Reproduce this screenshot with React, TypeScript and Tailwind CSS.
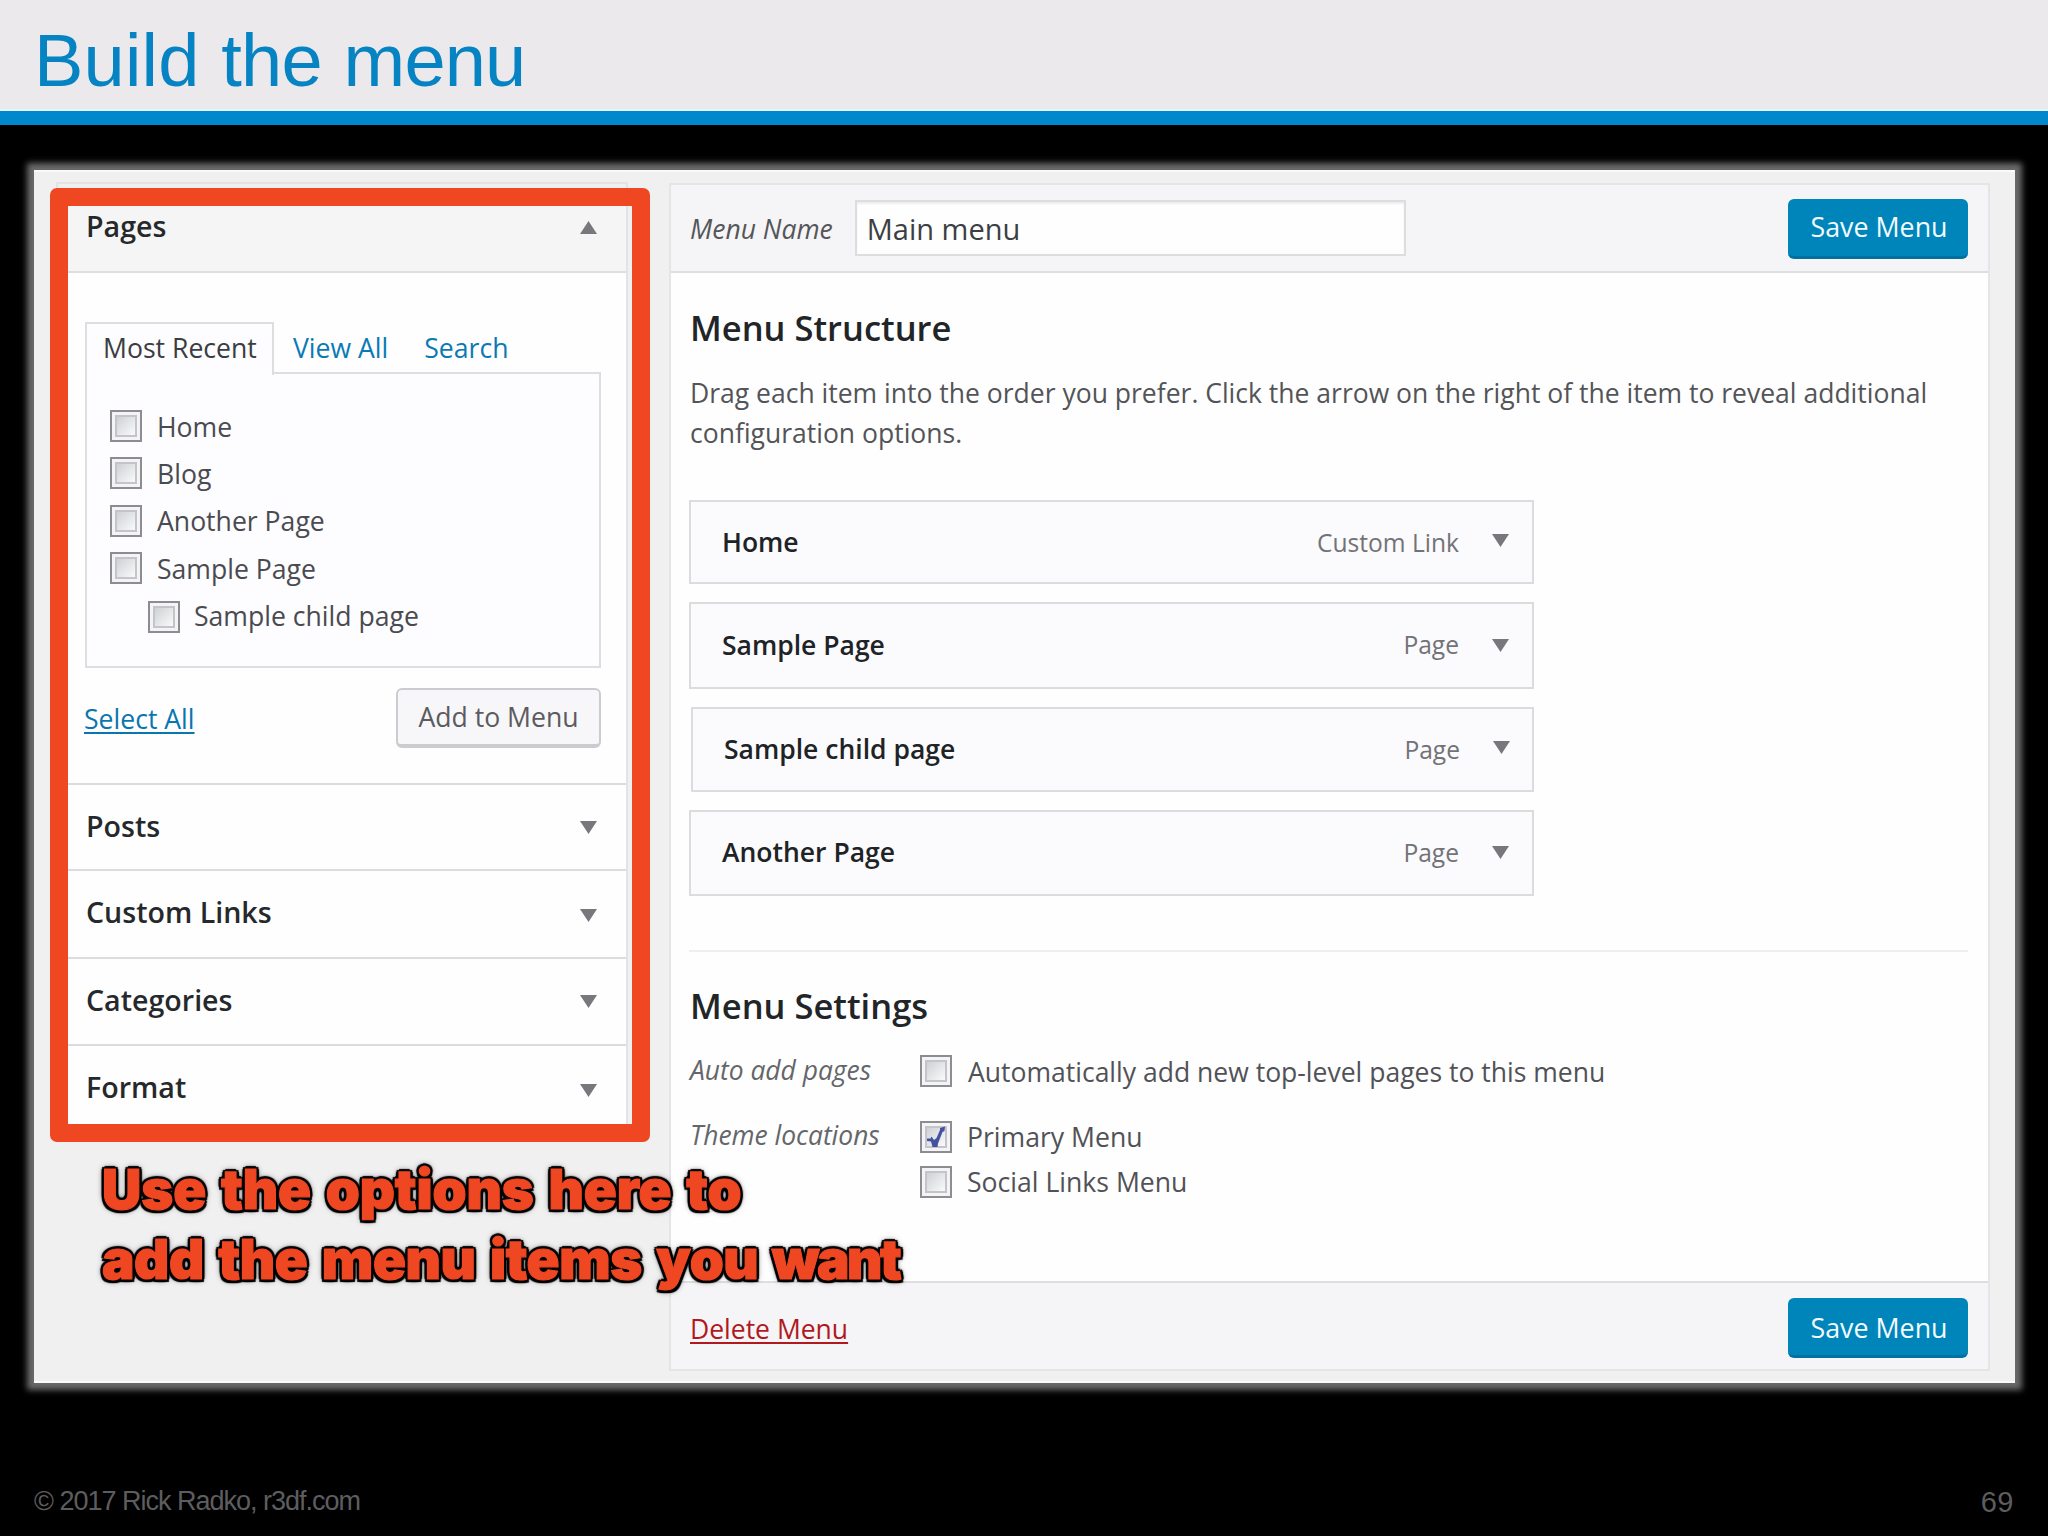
import type { ReactNode } from 'react';

function Triangle({ up = false, className = '' }: { up?: boolean; className?: string }) {
  return (
    <svg viewBox="0 0 17 13" className={`h-[13px] w-[17px] shrink-0 ${className}`} aria-hidden="true">
      <path d={up ? 'M0 13 L8.5 0 L17 13 Z' : 'M0 0 L17 0 L8.5 13 Z'} fill="#77787b" />
    </svg>
  );
}

function Checkbox({ checked = false, className = '' }: { checked?: boolean; className?: string }) {
  return (
    <span
      className={`relative block size-8 shrink-0 border-2 border-[#8c8c91] bg-[#f4f4f6] p-[3px] ${className}`}
    >
      <span className="block h-full w-full border-2 border-[#c3c5c8] bg-linear-to-br from-[#ced1d4] to-[#fafafa]" />
      {checked && (
        <svg viewBox="0 0 32 32" className="absolute -top-0.5 -left-0.5 size-8" aria-hidden="true">
          <path
            d="M7 17.5 L10.5 17.5 L11.5 15.5 L14 19 L16.5 17 L20 9 L20 7 L25 5.5 L24.5 10 L22.5 11 L18 22.5 L17.5 26 L12.5 26 L11 20.5 L7 20 Z"
            fill="#4353a2"
          />
        </svg>
      )}
    </span>
  );
}

function SaveButton({ className = '' }: { className?: string }) {
  return (
    <button
      className={`h-[60px] w-[180px] shrink-0 rounded-md border-b-[3px] border-[#0370a3] bg-[#0085ba] pl-0.5 text-[26.8px] text-[#f2fbff] ${className}`}
    >
      Save Menu
    </button>
  );
}

const pages = [
  { label: 'Home', row: '', box: 'mt-[3px]' },
  { label: 'Blog', row: 'mt-[7px]', box: 'mt-[3px]' },
  { label: 'Another Page', row: 'mt-[7px]', box: 'mt-[4px]' },
  { label: 'Sample Page', row: 'mt-[8px]', box: 'mt-[3px]' },
  { label: 'Sample child page', row: 'mt-[7px] ml-[38px]', box: 'mt-[5px]', child: true },
];

const sections = [
  { label: 'Posts', row: 'h-[86px] border-b-2', arrow: 'mt-[14px]' },
  { label: 'Custom Links', row: 'h-[88px] border-b-2', arrow: 'mt-[16px]' },
  { label: 'Categories', row: 'h-[87px] border-b-2', arrow: 'mt-[14px]' },
  { label: 'Format', row: 'h-[79px]', arrow: 'mt-[16px]' },
];

const menuItems = [
  { label: 'Home', type: 'Custom Link', row: 'h-[84px] pt-[2px]', arrow: 'mb-[5px]' },
  { label: 'Sample Page', type: 'Page', row: 'mt-[18px] h-[87px]', arrow: 'mb-px' },
  { label: 'Sample child page', type: 'Page', row: 'mt-[18px] ml-[2px] h-[85px] pt-px', arrow: 'mb-[5px] -mr-[1px]' },
  { label: 'Another Page', type: 'Page', row: 'mt-[18px] h-[86px]', arrow: 'mb-[2px]' },
];

function Setting({ label, children, className = '' }: { label?: string; children: ReactNode; className?: string }) {
  return (
    <div className={`flex h-10 leading-10 ${className}`}>
      <span className="-mt-0.5 w-[231px] shrink-0 pl-px text-[26.4px] text-[#64666a] italic">{label}</span>
      {children}
    </div>
  );
}

function Sidebar() {
  return (
    <aside className="flex w-[635px] shrink-0 flex-col pt-[12px] pl-4">
      <div className="ml-[6px] h-[6px] w-[572px] border-2 border-b-0 border-[#e3e3e4]" />
      <div className="h-[954px] w-[600px] rounded-[7px] border-[18px] border-[#f04723] bg-[#f0f0f0]">
        <div className="h-[918px] w-[560px] border-r-2 border-[#e3e3e5] bg-[#fefefe]">
          <div className="flex h-[67px] items-start justify-between border-b-2 border-[#dedee0] bg-[#f5f5f6] pr-[29px] pl-[18px]">
            <h3 className="text-[28.6px] leading-[39px] font-semibold text-[#26292c]">Pages</h3>
            <Triangle up className="mt-[15px]" />
          </div>

          <div className="h-[512px] border-b-2 border-[#dedbe0] px-[17px] pt-[49px] text-[26.6px]">
            <div className="flex h-[50px] leading-[49px] text-[#0a7ab5]">
              <span className="relative z-10 h-[53px] w-[189px] shrink-0 border-2 border-b-0 border-[#dedee0] bg-[#fdfcfe] pl-4 text-[#3a3d41]">
                Most Recent
              </span>
              <a className="mt-0.5 ml-[19px]">View All</a>
              <a className="mt-0.5 ml-[36px]">Search</a>
            </div>
            <div className="h-[296px] w-[516px] border-2 border-[#dedee0] bg-[#fdfcfe] pt-[33px] pl-[23px] text-[#4a4b50]">
              {pages.map((p) => (
                <div key={p.label} className={`flex h-10 leading-10 ${p.row}`}>
                  <Checkbox className={p.box} />
                  <span className={p.child ? 'ml-[14px]' : 'ml-[15px]'}>{p.label}</span>
                </div>
              ))}
            </div>
            <div className="mt-[19px] flex w-[516px] items-center justify-between">
              <a className="-ml-px pt-0.5 leading-[60px] text-[#0a76b0] underline decoration-2 underline-offset-[3px]">
                Select All
              </a>
              <button className="h-[60px] w-[205px] rounded-md border-2 border-b-4 border-[#cdcbd0] bg-[#f7f6f9] pt-0.5 text-[#5b5b60]">
                Add to Menu
              </button>
            </div>
          </div>

          {sections.map((s) => (
            <div
              key={s.label}
              className={`flex items-start justify-between border-[#dedbe0] pt-[22px] pr-[29px] pl-[18px] ${s.row}`}
            >
              <h3 className="text-[28.6px] leading-[38px] font-semibold text-[#26292c]">{s.label}</h3>
              <Triangle className={s.arrow} />
            </div>
          ))}
        </div>
      </div>
    </aside>
  );
}

function MenuEditor() {
  return (
    <main className="mt-[13px] flex h-[1188px] w-[1321px] flex-col border-2 border-[#e5e4e7] bg-[#fefefe]">
      <header className="flex h-[88px] shrink-0 items-center border-b-2 border-[#dedee0] bg-[#f5f4f6] pr-5 pl-[19px]">
        <span className="mt-[3px] text-[26.5px] text-[#54565a] italic">Menu Name</span>
        <div className="ml-[22px] h-[56px] w-[551px] border-2 border-[#dddde0] bg-[#fefefe] pl-[10px] text-[29px] leading-[54px] text-[#3c3f43] shadow-[inset_0_2px_2px_#eeeeee]">
          Main menu
        </div>
        <SaveButton className="mt-0.5 ml-auto pb-px" />
      </header>

      <div className="flex-1 pl-[18px] text-[26.6px]">
        <h2 className="mt-[32px] ml-px text-[34.5px] leading-[46px] font-semibold text-[#222528]">Menu Structure</h2>
        <p className="mt-[22px] ml-px text-[26.53px] leading-10 whitespace-nowrap text-[#535458]">
          Drag each item into the order you prefer. Click the arrow on the right of the item to reveal additional
          <br />
          configuration options.
        </p>

        <div className="mt-[47px] w-[845px]">
          {menuItems.map((m) => (
            <div
              key={m.label}
              className={`flex items-center border-2 border-[#dcdbde] bg-[#fbfafc] pr-[23px] pl-[31px] ${m.row}`}
            >
              <span className="text-[26.5px] font-semibold text-[#202326]">{m.label}</span>
              <span className="ml-auto text-[24.6px] text-[#727377]">{m.type}</span>
              <Triangle className={`ml-[33px] ${m.arrow}`} />
            </div>
          ))}
        </div>

        <hr className="mt-[54px] mr-5 border-t-2 border-[#efeef0]" />

        <h2 className="mt-[31px] ml-px text-[34.5px] leading-[46px] font-semibold text-[#222528]">Menu Settings</h2>
        <div className="mt-[23px] text-[#515257]">
          <Setting label="Auto add pages">
            <Checkbox className="mt-[3px]" />
            <span className="ml-4 text-[26.54px]">Automatically add new top-level pages to this menu</span>
          </Setting>
          <Setting label="Theme locations" className="mt-[25px]">
            <Checkbox checked className="mt-1" />
            <span className="ml-[15px]">Primary Menu</span>
          </Setting>
          <Setting className="mt-[5px]">
            <Checkbox className="mt-1" />
            <span className="ml-[15px]">Social Links Menu</span>
          </Setting>
        </div>
      </div>

      <footer className="flex h-[88px] shrink-0 items-center justify-between border-t-2 border-[#dedde0] bg-[#f5f4f6] pr-5 pl-[19px]">
        <a className="mt-[7px] text-[26.5px] text-[#b0191e] underline decoration-2 underline-offset-[3px]">Delete Menu</a>
        <SaveButton className="mt-1 pt-[3px]" />
      </footer>
    </main>
  );
}

export default function App() {
  return (
    <div className="flex h-[1536px] w-[2048px] flex-col overflow-hidden bg-black font-['Open_Sans',sans-serif]">
      <header className="h-[125px] shrink-0 border-b-[14px] border-[#0088cc] bg-[#ebe9ec] pt-[11px] pl-[34px] font-['Liberation_Sans',sans-serif] shadow-[inset_0_-2px_0_#e3f5fb]">
        <h1 className="text-[74px] leading-[99px] tracking-[-0.8px] text-[#0583c2] [word-spacing:2px]">
          <span className="tracking-[0.2px]">Build</span> the menu
        </h1>
      </header>

      <section className="relative mt-[45px] ml-[34px] flex h-[1213px] w-[1981px] shrink-0 bg-[#f0f0f1] shadow-[inset_0_2px_0_#fafafa,inset_0_-2px_0_#fafafa,0_0_6px_7px_#6a6a6a]">
        <Sidebar />
        <MenuEditor />
        <p className="absolute top-[985px] left-[68px] font-['Inter',sans-serif] text-[54.5px] leading-[69.5px] font-black whitespace-nowrap text-[#f04723] [-webkit-text-stroke:1.2px_#f04723] [text-shadow:3px_0_1px_#000,-3px_0_1px_#000,0_3px_1px_#000,0_-3px_1px_#000,2.5px_2.5px_1px_#000,-2.5px_2.5px_1px_#000,2.5px_-2.5px_1px_#000,-2.5px_-2.5px_1px_#000,0_0_7px_#000]">
          <span className="tracking-[-0.1px] [word-spacing:4px]">Use the options here to</span>
          <br />
          <span className="tracking-[-0.4px] [word-spacing:4px]">
            add the menu items you <span className="-ml-px tracking-[-2.4px]">want</span>
          </span>
        </p>
      </section>

      <footer className="mt-[98px] flex h-10 items-start justify-between pr-[34px] pl-[34px] font-['Liberation_Sans',sans-serif] leading-10 text-[#5d5d5f]">
        <span className="text-[27px] tracking-[-1px]">© 2017 Rick Radko, r3df.com</span>
        <span className="mt-px text-[29px] tracking-[0.5px]">69</span>
      </footer>
    </div>
  );
}
